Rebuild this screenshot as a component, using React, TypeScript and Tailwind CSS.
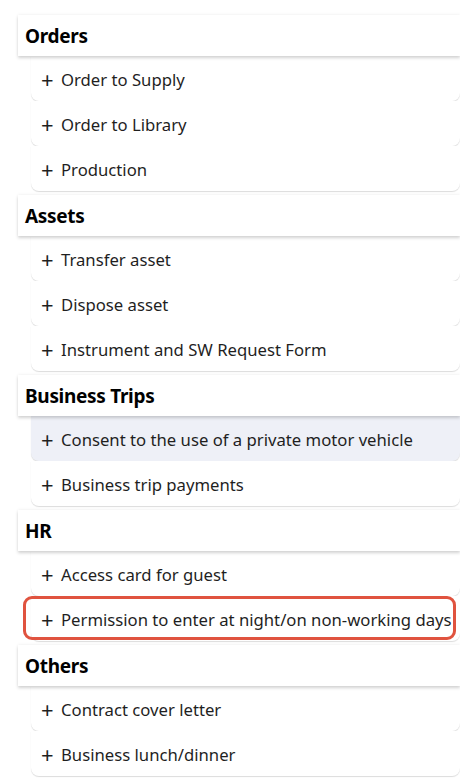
import React from 'react';

const SECTIONS = [
  { title: 'Orders', items: ['Order to Supply', 'Order to Library', 'Production'] },
  { title: 'Assets', items: ['Transfer asset', 'Dispose asset', 'Instrument and SW Request Form'] },
  { title: 'Business Trips', items: ['Consent to the use of a private motor vehicle', 'Business trip payments'] },
  { title: 'HR', items: ['Access card for guest', 'Permission to enter at night/on non-working days'] },
  { title: 'Others', items: ['Contract cover letter', 'Business lunch/dinner'] },
];

const HIGHLIGHT = 'Consent to the use of a private motor vehicle';
const MARKED = 'Permission to enter at night/on non-working days';

export default function App() {
  return (
    <div
      className="w-[460px] h-[780px] overflow-hidden bg-white pt-[11px]"
      style={{ fontFamily: '"Noto Sans", "Open Sans", sans-serif' }}
    >
      {SECTIONS.map((section) => (
        <div key={section.title}>
          {/* Section header */}
          <div className="mt-[4px] ml-[18px] h-[41px] flex items-center pl-[7px] pt-[2px] bg-white shadow-[0_2px_3px_rgba(0,0,0,0.18),0_-1px_3px_rgba(0,0,0,0.04)] relative z-10">
            <span className="text-[19px] font-bold text-black tracking-[-0.3px]">{section.title}</span>
          </div>

          {/* Items */}
          {section.items.map((item) => (
            <div key={item} className="relative ml-[31px] h-[45px]">
              <div
                className={`h-full flex items-center pl-[10px] pt-[3px] rounded-b-lg shadow-[0_1px_1px_rgba(0,0,0,0.14)] ${
                  item === HIGHLIGHT ? 'bg-[#eef0f7]' : 'bg-white'
                }`}
              >
                <span className="text-[22px] leading-none text-[#1f1f1f] w-[20px] -mt-[3px]">+</span>
                <span className="text-[16.7px] text-[#1f1f1f] whitespace-nowrap">{item}</span>
              </div>
              {item === MARKED && (
                <div className="absolute left-[-8px] top-[0px] w-[433px] h-[44px] border-[3px] border-[#e0533f] rounded-[9px] pointer-events-none" />
              )}
            </div>
          ))}
        </div>
      ))}
    </div>
  );
}
